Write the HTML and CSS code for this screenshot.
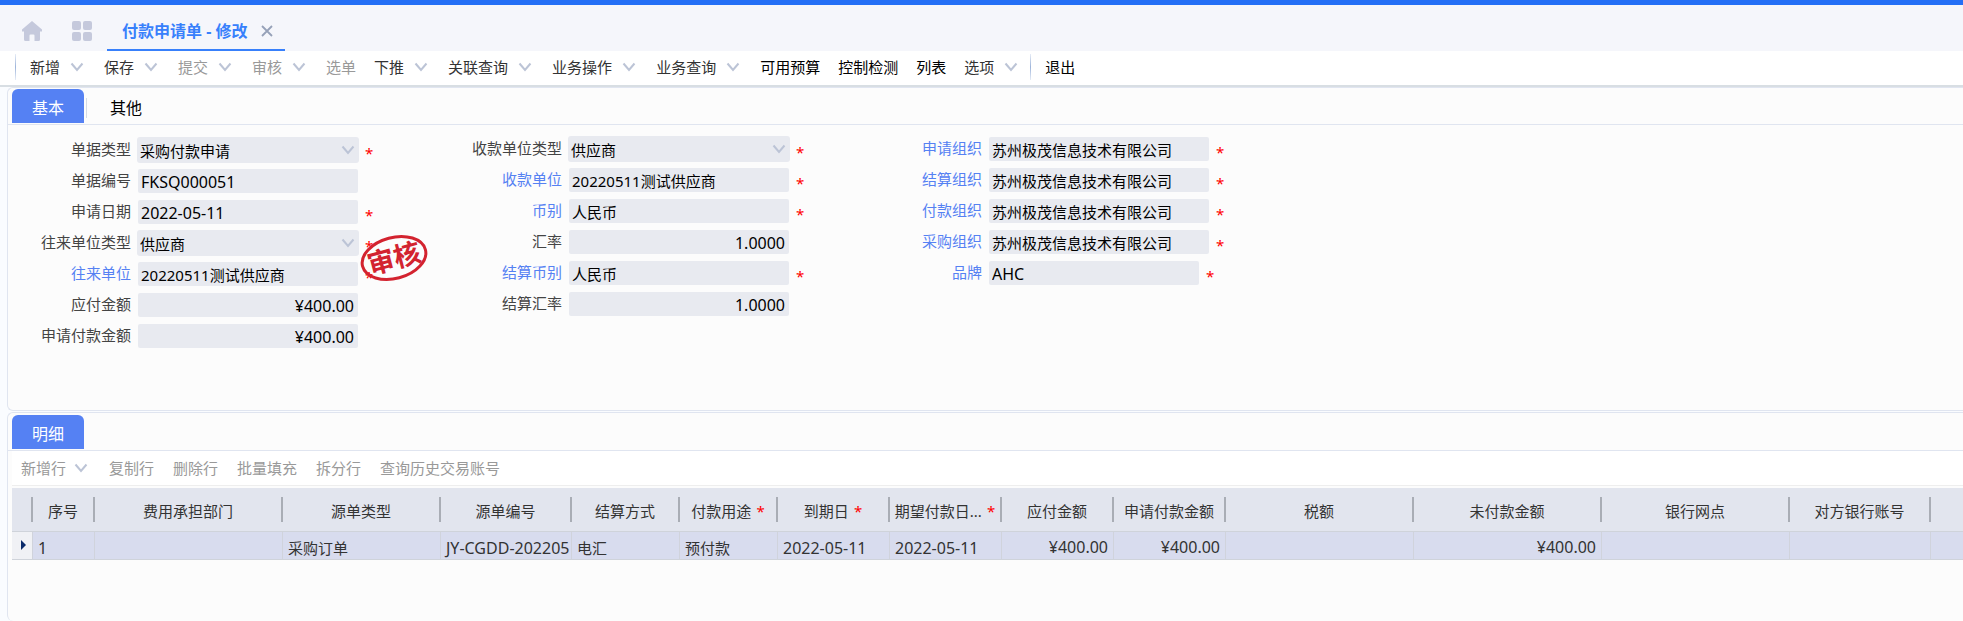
FILE: index.html
```
<!DOCTYPE html>
<html lang="zh-CN">
<head>
    <meta charset="UTF-8">
    <meta name="viewport" content="width=device-width, initial-scale=1.0">
    <title>付款申请单 - 修改</title>
    <link rel="stylesheet" href="styles.css">
</head>
<body>
    <svg class="defs" width="0" height="0" aria-hidden="true">
        <symbol id="chevron" viewBox="0 0 16 10">
            <path d="M1.5 1.5L7 8L12.5 1.5" fill="none" stroke="currentColor" stroke-width="2"/>
        </symbol>
    </svg>

    <header class="tab-bar">
        <button class="icon-btn" aria-label="首页">
            <svg width="20" height="20" viewBox="0 0 20 20"><path d="M10 0L20 8.5V10.500H18V18.5Q18 20 16.500 20H12.500V14.500Q12.500 13.500 11.500 13.500H8.500Q7.500 13.500 7.500 14.500V20H3.500Q2 20 2 18.500V10.500H0V8.500Z" fill="currentColor"/></svg>
        </button>
        <button class="icon-btn" aria-label="应用">
            <svg width="20" height="20" viewBox="0 0 20 20" fill="currentColor"><rect width="9" height="9" rx="2"/><rect x="11" width="9" height="9" rx="2"/><rect y="11" width="9" height="9" rx="2"/><rect x="11" y="11" width="9" height="9" rx="2"/></svg>
        </button>
        <div class="page-tab">
            <span>付款申请单 - 修改</span>
            <button class="close-btn" aria-label="关闭">
                <svg width="12" height="12" viewBox="0 0 12 12"><path d="M1 1L11 11M11 1L1 11" stroke="currentColor" stroke-width="1.800"/></svg>
            </button>
        </div>
    </header>

    <nav class="toolbar">
        <span class="divider"></span>
        <button class="tool">新增<svg class="arrow"><use href="#chevron"/></svg></button>
        <button class="tool">保存<svg class="arrow"><use href="#chevron"/></svg></button>
        <button class="tool muted">提交<svg class="arrow"><use href="#chevron"/></svg></button>
        <button class="tool muted">审核<svg class="arrow"><use href="#chevron"/></svg></button>
        <button class="tool muted">选单</button>
        <button class="tool">下推<svg class="arrow"><use href="#chevron"/></svg></button>
        <button class="tool">关联查询<svg class="arrow"><use href="#chevron"/></svg></button>
        <button class="tool">业务操作<svg class="arrow"><use href="#chevron"/></svg></button>
        <button class="tool">业务查询<svg class="arrow"><use href="#chevron"/></svg></button>
        <button class="tool strong">可用预算</button>
        <button class="tool strong">控制检测</button>
        <button class="tool strong">列表</button>
        <button class="tool">选项<svg class="arrow"><use href="#chevron"/></svg></button>
        <span class="divider"></span>
        <button class="tool strong">退出</button>
    </nav>

    <main class="content">
        <section class="panel">
            <div class="panel-tabs">
                <button class="panel-tab active">基本</button>
                <button class="panel-tab">其他</button>
            </div>
            <form class="form-grid">
                <div class="form-col first">
                    <div class="field">
                        <label for="billType">单据类型</label>
                        <span class="select-box"><select id="billType"><option>采购付款申请</option></select><svg class="arrow"><use href="#chevron"/></svg></span>
                        <span class="required">*</span>
                    </div>
                    <div class="field">
                        <label for="billNo">单据编号</label>
                        <input id="billNo" class="code" type="text" value="FKSQ000051">
                    </div>
                    <div class="field">
                        <label for="applyDate">申请日期</label>
                        <input id="applyDate" class="code" type="text" value="2022-05-11">
                        <span class="required">*</span>
                    </div>
                    <div class="field">
                        <label for="contactType">往来单位类型</label>
                        <span class="select-box"><select id="contactType"><option>供应商</option></select><svg class="arrow"><use href="#chevron"/></svg></span>
                        <span class="required">*</span>
                    </div>
                    <div class="field">
                        <label class="link" for="contact">往来单位</label>
                        <input id="contact" type="text" value="20220511测试供应商">
                        <span class="required">*</span>
                    </div>
                    <div class="field">
                        <label for="payable">应付金额</label>
                        <input id="payable" class="number" type="text" value="¥400.00">
                    </div>
                    <div class="field">
                        <label for="applyAmount">申请付款金额</label>
                        <input id="applyAmount" class="number" type="text" value="¥400.00">
                    </div>
                    <svg class="stamp" width="70" height="50" viewBox="0 0 70 50">
                        <g transform="rotate(-15 35 25)">
                            <ellipse cx="35" cy="25" rx="32.500" ry="20.500"/>
                            <text x="35" y="35" text-anchor="middle">审核</text>
                        </g>
                    </svg>
                </div>
                <div class="form-col">
                    <div class="field">
                        <label for="payeeType">收款单位类型</label>
                        <span class="select-box"><select id="payeeType"><option>供应商</option></select><svg class="arrow"><use href="#chevron"/></svg></span>
                        <span class="required">*</span>
                    </div>
                    <div class="field">
                        <label class="link" for="payee">收款单位</label>
                        <input id="payee" type="text" value="20220511测试供应商">
                        <span class="required">*</span>
                    </div>
                    <div class="field">
                        <label class="link" for="currency">币别</label>
                        <input id="currency" type="text" value="人民币">
                        <span class="required">*</span>
                    </div>
                    <div class="field">
                        <label for="rate">汇率</label>
                        <input id="rate" class="number" type="text" value="1.0000">
                    </div>
                    <div class="field">
                        <label class="link" for="settleCurrency">结算币别</label>
                        <input id="settleCurrency" type="text" value="人民币">
                        <span class="required">*</span>
                    </div>
                    <div class="field">
                        <label for="settleRate">结算汇率</label>
                        <input id="settleRate" class="number" type="text" value="1.0000">
                    </div>
                </div>
                <div class="form-col">
                    <div class="field">
                        <label class="link" for="applyOrg">申请组织</label>
                        <input id="applyOrg" type="text" value="苏州极茂信息技术有限公司">
                        <span class="required">*</span>
                    </div>
                    <div class="field">
                        <label class="link" for="settleOrg">结算组织</label>
                        <input id="settleOrg" type="text" value="苏州极茂信息技术有限公司">
                        <span class="required">*</span>
                    </div>
                    <div class="field">
                        <label class="link" for="payOrg">付款组织</label>
                        <input id="payOrg" type="text" value="苏州极茂信息技术有限公司">
                        <span class="required">*</span>
                    </div>
                    <div class="field">
                        <label class="link" for="purchaseOrg">采购组织</label>
                        <input id="purchaseOrg" type="text" value="苏州极茂信息技术有限公司">
                        <span class="required">*</span>
                    </div>
                    <div class="field">
                        <label class="link" for="brand">品牌</label>
                        <input id="brand" class="code short" type="text" value="AHC">
                        <span class="required">*</span>
                    </div>
                </div>
            </form>
        </section>

        <section class="panel detail">
            <div class="panel-tabs">
                <button class="panel-tab active">明细</button>
            </div>
            <div class="sub-toolbar">
                <button class="tool muted">新增行<svg class="arrow"><use href="#chevron"/></svg></button>
                <button class="tool muted">复制行</button>
                <button class="tool muted">删除行</button>
                <button class="tool muted">批量填充</button>
                <button class="tool muted">拆分行</button>
                <button class="tool muted">查询历史交易账号</button>
            </div>
            <div class="table-wrap">
                <table class="detail-table">
                    <colgroup>
                        <col class="w-mark"><col class="w-seq"><col class="w-wide"><col class="w-type"><col class="w-no"><col class="w-settle"><col class="w-use"><col class="w-mid"><col class="w-mid"><col class="w-mid"><col class="w-mid"><col class="w-wide"><col class="w-wide"><col class="w-wide"><col class="w-account"><col class="w-mid">
                    </colgroup>
                    <thead>
                        <tr>
                            <th></th>
                            <th>序号</th>
                            <th>费用承担部门</th>
                            <th>源单类型</th>
                            <th>源单编号</th>
                            <th>结算方式</th>
                            <th>付款用途<span class="required">*</span></th>
                            <th>到期日<span class="required">*</span></th>
                            <th>期望付款日...<span class="required">*</span></th>
                            <th>应付金额</th>
                            <th>申请付款金额</th>
                            <th>税额</th>
                            <th>未付款金额</th>
                            <th>银行网点</th>
                            <th>对方银行账号</th>
                            <th></th>
                        </tr>
                    </thead>
                    <tbody>
                        <tr>
                            <td class="marker"><svg width="5" height="10" viewBox="0 0 5 10"><path d="M0 0L5 5L0 10Z" fill="#0a2a6b"/></svg></td>
                            <td class="code">1</td>
                            <td></td>
                            <td>采购订单</td>
                            <td class="code">JY-CGDD-202205</td>
                            <td>电汇</td>
                            <td>预付款</td>
                            <td class="code">2022-05-11</td>
                            <td class="code">2022-05-11</td>
                            <td class="number">¥400.00</td>
                            <td class="number">¥400.00</td>
                            <td></td>
                            <td class="number">¥400.00</td>
                            <td></td>
                            <td></td>
                            <td></td>
                        </tr>
                    </tbody>
                </table>
            </div>
        </section>
    </main>
</body>
</html>
```
FILE: styles.css
```
* {
    margin: 0;
    padding: 0;
    box-sizing: border-box;
}

body {
    display: flex;
    flex-direction: column;
    min-height: 100vh;
    background: #fafcff;
    color: #333;
    font-family: 'Noto Sans', 'Noto Sans CJK SC', sans-serif;
    font-size: 15px;
    line-height: 20px;
    overflow: hidden;
}

button,
input,
select {
    border: none;
    background: none;
    color: inherit;
    font: inherit;
}

.defs {
    position: absolute;
}

.tab-bar {
    display: flex;
    align-items: stretch;
    height: 51px;
    padding-left: 22px;
    border-top: 5px solid #246ff6;
    background: #f5f6fb;
}

.icon-btn {
    display: flex;
    align-items: center;
    width: 50px;
    padding-top: 6px;
    color: #c5c9dc;
}

.page-tab {
    display: flex;
    align-items: center;
    gap: 14px;
    margin-left: -15px;
    padding: 8px 12px 0 15px;
    border-bottom: 2px solid #3880fb;
    color: #3880fb;
    font-size: 16px;
    font-weight: bold;
}

.close-btn {
    display: flex;
    color: #96a1b8;
}

.toolbar {
    display: flex;
    align-items: center;
    gap: 18px;
    height: 34px;
    padding: 0 0 2px 15px;
    background: #fff;
}

.divider {
    width: 1px;
    height: 26px;
    margin-right: -4px;
    background: linear-gradient(#e6ecf6, #9db4da, #e6ecf6);
}

.tool + .divider {
    margin-left: -8px;
}

.tool {
    display: flex;
    align-items: center;
    white-space: nowrap;
}

.arrow {
    flex: none;
    width: 16px;
    height: 10px;
    margin-left: 10px;
    color: #bcc4d6;
}

.muted {
    color: #999;
}

.strong {
    color: #000;
}

.content {
    display: flex;
    flex: 1;
    flex-direction: column;
    gap: 1px;
    padding-left: 7px;
    border-top: 2px solid #d8dee3;
}

.panel {
    border: 1px solid #e0e5f0;
    border-right: none;
    border-radius: 6px 0 0 6px;
    background: #fcfcfc;
}

.panel-tabs {
    display: flex;
    gap: 2px;
    padding: 1px 0 1px 4px;
    border-bottom: 1px solid #e0e5f0;
}

.detail .panel-tabs {
    padding-top: 2px;
}

.panel-tab {
    width: 80px;
    height: 34px;
    padding-top: 3px;
    color: #000;
    font-size: 16px;
}

.panel-tab.active {
    width: 72px;
    border-radius: 6px 6px 0 0;
    background: #5581f3;
    color: #fff;
}

.panel-tab.active + .panel-tab {
    background: linear-gradient(#d5dbe5, #d5dbe5) no-repeat 0 9px / 1px 20px;
}

.form-grid {
    display: grid;
    grid-template-columns: 431px 420px 1fr;
    padding: 12px 0 62px;
}

.form-col {
    display: flex;
    flex-direction: column;
    gap: 7px;
}

.form-col.first {
    position: relative;
    padding-top: 1px;
}

.field {
    display: flex;
    align-items: center;
    gap: 7px;
    height: 24px;
}

.field label {
    width: 123px;
    padding-bottom: 2px;
    color: #444;
    text-align: right;
}

.field label.link {
    color: #5581f3;
}

.field input {
    width: 220px;
    height: 24px;
    padding: 1px 4px 0 3px;
    border-radius: 2px;
    background: #e8eaf0;
    color: #000;
}

.field input.short {
    width: 210px;
}

.field .number {
    text-align: right;
}

.code,
.number,
.field .code,
.field .number {
    font-size: 16px;
}

.select-box {
    position: relative;
    width: 222px;
    height: 26px;
    margin: 0 -1px;
}

.select-box select {
    width: 100%;
    height: 100%;
    padding: 1px 3px 0;
    border-radius: 3px;
    appearance: none;
    background: #e8eaf0;
    color: #000;
}

.select-box .arrow {
    position: absolute;
    top: 8px;
    right: 2px;
    pointer-events: none;
}

.required {
    color: #f00;
}

.field .required {
    padding-top: 5px;
}

.stamp {
    position: absolute;
    top: 96px;
    left: 351px;
}

.stamp ellipse {
    fill: none;
    stroke: #d3232f;
    stroke-width: 3;
}

.stamp text {
    fill: #d3232f;
    font-size: 27px;
    font-weight: bold;
}

.detail {
    flex: 1;
    border-bottom: none;
}

.sub-toolbar {
    display: flex;
    align-items: center;
    gap: 19px;
    height: 35px;
    margin-left: 4px;
    padding-left: 9px;
    border-bottom: 1px solid #eee;
    background: #fff;
}

.sub-toolbar .arrow {
    margin-left: 8px;
}

.table-wrap {
    margin: 2px 0 0 4px;
    overflow: hidden;
}

.detail-table {
    width: 2030px;
    border-collapse: separate;
    border-spacing: 0;
    table-layout: fixed;
}

.w-mark {
    width: 21px;
}

.w-seq {
    width: 62px;
}

.w-wide {
    width: 188px;
}

.w-type {
    width: 158px;
}

.w-no {
    width: 131px;
}

.w-settle {
    width: 108px;
}

.w-use {
    width: 98px;
}

.w-mid {
    width: 112px;
}

.w-account {
    width: 141px;
}

.detail-table th {
    height: 44px;
    padding: 3px 2px 0 0;
    border-bottom: 1px solid #cfd3da;
    background: linear-gradient(#a9adb5, #a9adb5) no-repeat right 9px / 2px 25px, #e2e5ee;
    background-origin: border-box;
    font-weight: normal;
    white-space: nowrap;
}

.detail-table th .required {
    margin-left: 5px;
}

.detail-table td {
    height: 28px;
    padding: 5px 5px 0;
    border-right: 1px solid #d0d3dc;
    border-bottom: 1px solid #cfd3da;
    background: #d8dcee;
    overflow: hidden;
    white-space: nowrap;
}

.detail-table td.number {
    padding-top: 3px;
    text-align: right;
}

.detail-table td.marker {
    padding: 0 0 2px 9px;
    background: #f0f1f5;
}

.marker svg {
    display: block;
}
```
